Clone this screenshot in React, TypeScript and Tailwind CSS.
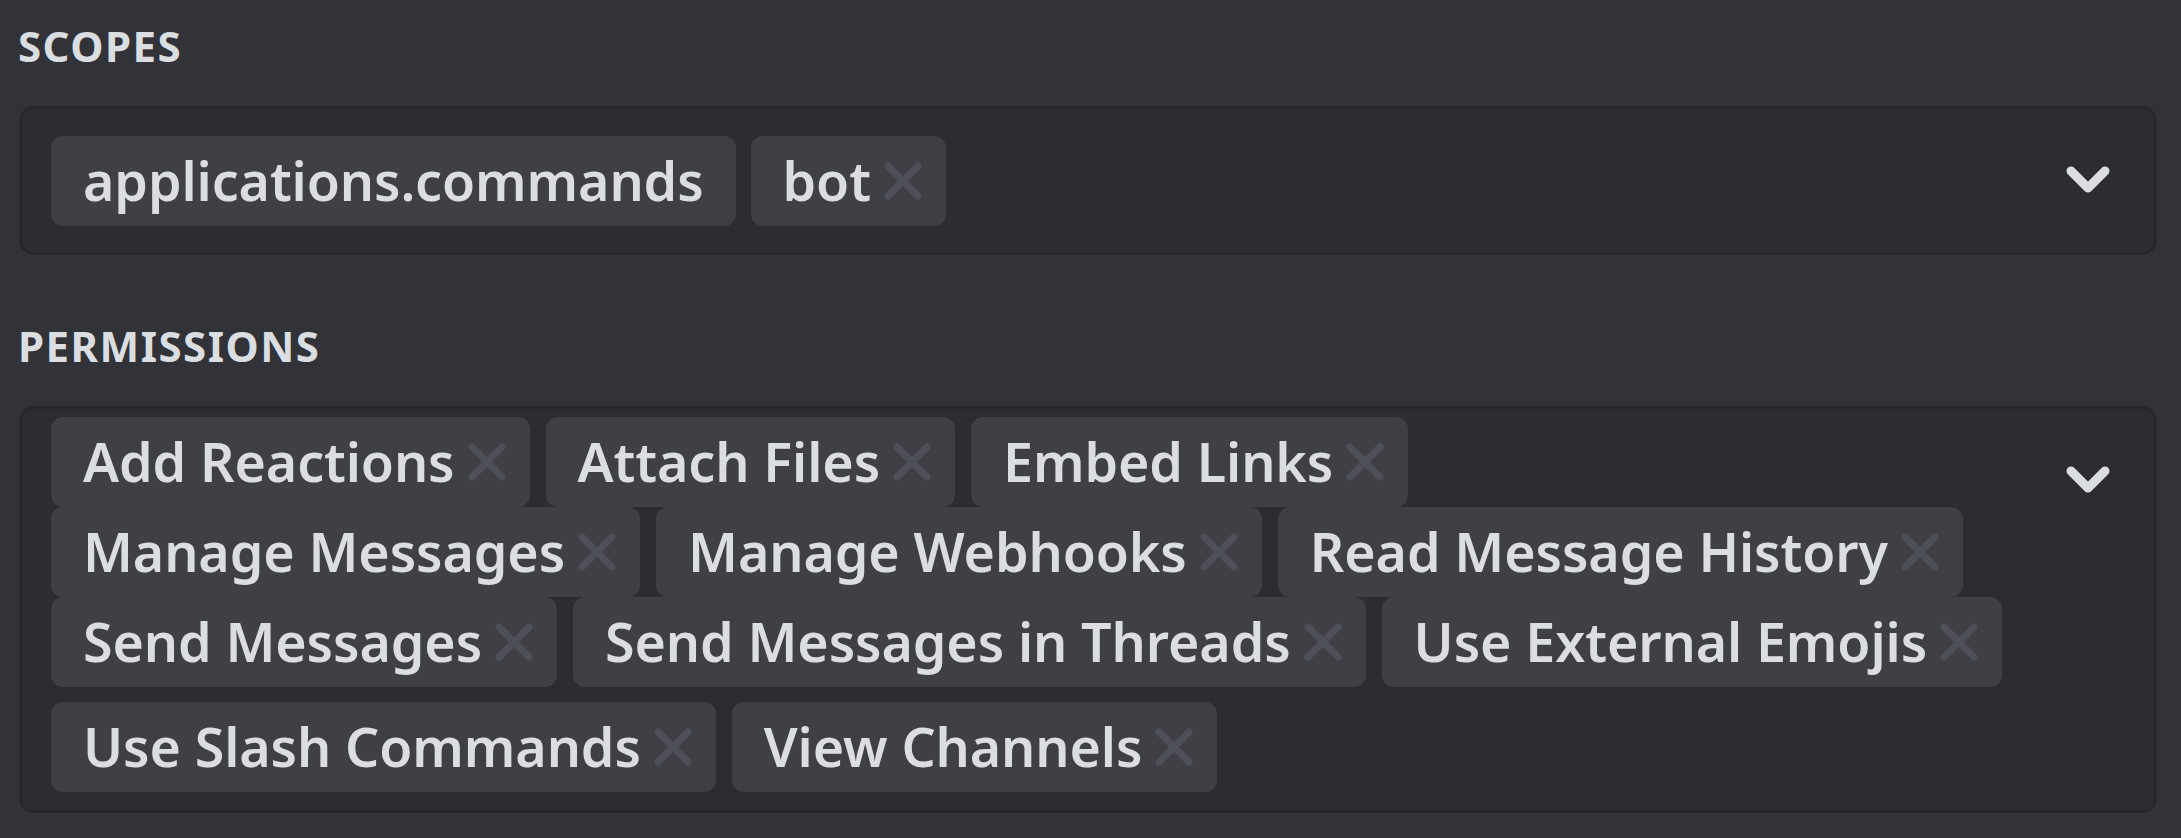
import React from "react"

const scopes = [
  { name: "applications.commands", removable: false },
  { name: "bot", removable: true },
]

const permissionRows = [
  ["Add Reactions", "Attach Files", "Embed Links"],
  ["Manage Messages", "Manage Webhooks", "Read Message History"],
  ["Send Messages", "Send Messages in Threads", "Use External Emojis"],
  ["Use Slash Commands", "View Channels"],
]

function CloseIcon() {
  return (
    <svg width="38" height="38" viewBox="0 0 38 38" className="shrink-0">
      <path d="M4 4 L34 34 M34 4 L4 34" stroke="#4e5058" strokeWidth="7" strokeLinecap="round" fill="none" />
    </svg>
  )
}

function Chevron() {
  return (
    <svg width="44" height="27" viewBox="0 0 44 27" className="shrink-0 overflow-visible">
      <polyline
        points="5,5 22,22 39,5"
        stroke="#dbdee1"
        strokeWidth="9"
        strokeLinecap="round"
        strokeLinejoin="round"
        fill="none"
      />
    </svg>
  )
}

function Tag({ label, removable = true }: { label: string; removable?: boolean }) {
  return (
    <div
      className={`flex h-[90px] items-center rounded-[12px] bg-[#3e4046] pl-[32px] ${
        removable ? "pr-[24px]" : "pr-[32px]"
      }`}
    >
      <span className="text-[53.75px] leading-[90px] font-semibold tracking-[-0.1px] text-[#dbdee1] whitespace-nowrap">
        {label}
      </span>
      {removable && (
        <span className="ml-[13px] flex items-center">
          <CloseIcon />
        </span>
      )}
    </div>
  )
}

function SectionLabel({ children }: { children: React.ReactNode }) {
  return (
    <h2 className="text-[42px] leading-[42px] font-bold uppercase tracking-[0.035em] text-[#dbdee1]">{children}</h2>
  )
}

export default function App() {
  return (
    <div
      className="min-h-[838px] w-full bg-[#313338] pl-[18px] pr-[24px] pt-[25px]"
      style={{ fontFamily: '"Noto Sans", "Open Sans", sans-serif' }}
    >
      <SectionLabel>Scopes</SectionLabel>
      <div className="mt-[39px] ml-[1px] flex items-start rounded-[15px] border-[3px] border-[#27282c] bg-[#2b2d31] pl-[29px] pr-[44px]">
        <div className="flex flex-1 gap-[15px] pt-[27px] pb-[26px]">
          {scopes.map((s) => (
            <Tag key={s.name} label={s.name} removable={s.removable} />
          ))}
        </div>
        <div className="pt-[57px]">
          <Chevron />
        </div>
      </div>

      <div className="mt-[70px]">
        <SectionLabel>Permissions</SectionLabel>
      </div>
      <div className="mt-[39px] ml-[1px] flex items-start rounded-[15px] border-[3px] border-[#27282c] bg-[#2b2d31] pl-[29px] pr-[44px]">
        <div className="flex flex-1 flex-col pt-[8px] pb-[18px]">
          {permissionRows.map((row, i) => (
            <div key={i} className={`flex gap-[16px] ${i === 3 ? "mt-[15px]" : ""}`}>
              {row.map((p) => (
                <Tag key={p} label={p} />
              ))}
            </div>
          ))}
        </div>
        <div className="pt-[57px]">
          <Chevron />
        </div>
      </div>
    </div>
  )
}
